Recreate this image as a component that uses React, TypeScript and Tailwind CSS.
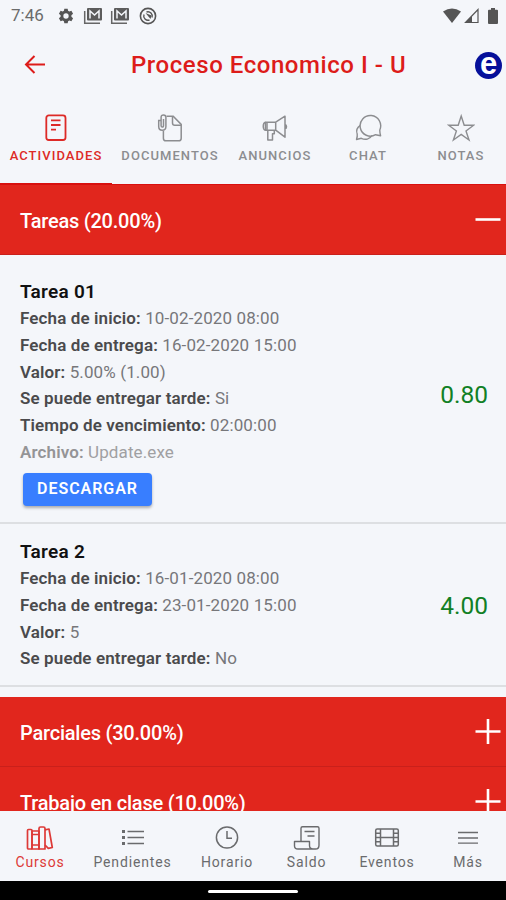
import type { ReactNode } from "react";
import clsx from "clsx";

const ActivitiesIcon = () => (
  <svg width="28" height="30" viewBox="0 0 28 30" fill="none" stroke="currentColor" strokeWidth="1.8">
    <rect x="4.3" y="2.4" width="19.2" height="24.6" rx="2.5" />
    <path d="M9 7.3h9.5M9 12h9.5M9 16.6h5" />
  </svg>
);

const DocumentsIcon = () => (
  <svg width="28" height="30" viewBox="0 0 28 30" fill="none" stroke="currentColor" strokeWidth="1.5">
    <path d="M10.5 3.2h6.700l8 8.200v13.800q0 2.600-2.600 2.600H10q-2.600 0-2.600-2.600V18" />
    <path d="M16.500 3.500v6.500q0 2.300 2.300 2.300h6.500" />
    <path d="M5 7.500H2.700v6q0 3.800 3.600 3.800t3.600-3.800V4.300q0-2.300-2.400-2.300T5.100 4.300v8.500q0 1.300 1.200 1.300t1.200-1.300V6" />
  </svg>
);

const MegaphoneIcon = () => (
  <svg width="28" height="30" viewBox="0 0 28 30" fill="none" stroke="currentColor" strokeWidth="1.5" strokeLinejoin="round">
    <path d="M4.500 9.200h10.200v8H4.500zM14.700 9.200L24 3.200v21l-9.300-7M24 11.500c2 .5 2 3.800 0 4.300" />
    <path d="M4.500 9.200c-3 .6-3 7.400 0 8M6.800 17.200v9.800h4.700v-6.300h1.800v-3.500M6 9.200v8" />
  </svg>
);

const ChatIcon = () => (
  <svg width="28" height="30" viewBox="0 0 28 30" fill="none" stroke="currentColor" strokeWidth="1.4" strokeLinejoin="round">
    <path d="M26.600 22.700l-5-1A10.300 10.300 0 1 1 25.800 17c-.1 2 .4 4 .8 5.700z" />
    <path d="M6.300 12.300c-3.300 2.200-4.300 5.500-3.100 8.700.3 1.800-.1 3.700-.7 5.500l4.800-1.200c4 2 8.500 1 10.700-2.800" />
  </svg>
);

const StarIcon = () => (
  <svg width="28" height="30" viewBox="0 0 28 30" fill="none" stroke="currentColor" strokeWidth="1.4">
    <path d="M14.200 3l3 9.200h9.500l-7.700 5.700 3 9.100-7.800-5.600-7.800 5.600 3-9.100-7.700-5.700h9.500z" />
  </svg>
);

const BooksIcon = () => (
  <svg width="28" height="26" viewBox="0 0 28 26" fill="none" stroke="currentColor" strokeWidth="1.7" strokeLinejoin="round">
    <rect x="1.500" y="4.500" width="4.500" height="19.500" rx="1" />
    <path d="M6 6h7v18H6zM6 9.500h7M6 20h7" />
    <path d="M13 3.500q0-1.500 1.500-1.500h3q1.500 0 1.500 1.500V24h-6z" />
    <path d="M19 4.800l4-.8 3.300 18.500-4 .9L19 20" />
  </svg>
);

const ListIcon = () => (
  <svg width="24" height="26" viewBox="0 0 24 26" fill="none" stroke="currentColor" strokeWidth="1.500">
    <path d="M6.500 6.500H23M6.500 12.500H23M6.500 18.500H23" />
    <path d="M1 6.500h3M1 12.500h3M1 18.500h3" strokeWidth="3" />
  </svg>
);

const ClockIcon = () => (
  <svg width="26" height="26" viewBox="0 0 26 26" fill="none" stroke="currentColor" strokeWidth="1.500">
    <circle cx="13" cy="12.500" r="10.600" />
    <path d="M13 6v7.300h5" />
  </svg>
);

const ReceiptIcon = () => (
  <svg width="28" height="26" viewBox="0 0 28 26" fill="none" stroke="currentColor" strokeWidth="1.400" strokeLinejoin="round">
    <path d="M8 16.500V3.200q0-1.500 1.500-1.500h15q1.500 0 1.500 1.500v17q0 3.800-3.500 3.800H5q-3.500 0-3.500-3v-4.500h15v4q0 3.500 3.500 3.500" />
    <path d="M11.500 6.500h10M14.500 11h7" />
  </svg>
);

const FilmIcon = () => (
  <svg width="26" height="26" viewBox="0 0 26 26" fill="none" stroke="currentColor" strokeWidth="1.500">
    <rect x="1.700" y="4" width="22.600" height="17" rx="1.500" />
    <path d="M6.500 4v17M19.500 4v17M6.500 12.500h13M1.700 8.200h4.800M1.700 12.500h4.800M1.700 16.800h4.800M19.500 8.200h4.800M19.500 12.500h4.800M19.500 16.800h4.800" />
  </svg>
);

const MenuIcon = () => (
  <svg width="22" height="26" viewBox="0 0 22 26" fill="none" stroke="currentColor" strokeWidth="1.300">
    <path d="M1 7.500h20M1 13h20M1 18.200h20" />
  </svg>
);

const MailIcon = () => (
  <svg width="20" height="18" viewBox="0 0 20 18" fill="none">
    <path d="M1.700 4v12.200H17" stroke="#666" strokeWidth="1.500" />
    <rect x="4" y="1" width="15" height="12.500" rx="1" fill="#5c5c5c" />
    <path d="M7 11.500V4l4.500 4L16 4v7.500" stroke="#f4f6fa" strokeWidth="1.500" />
  </svg>
);

const tabs = [
  { label: "ACTIVIDADES", icon: <ActivitiesIcon />, width: "w-[112px]", active: true },
  { label: "DOCUMENTOS", icon: <DocumentsIcon />, width: "w-[116px]" },
  { label: "ANUNCIOS", icon: <MegaphoneIcon />, width: "w-[94px]" },
  { label: "CHAT", icon: <ChatIcon />, width: "w-[92px]" },
  { label: "NOTAS", icon: <StarIcon />, width: "w-[94px]" },
];

const navItems = [
  { label: "Cursos", icon: <BooksIcon />, width: "w-[80px]", active: true },
  { label: "Pendientes", icon: <ListIcon />, width: "w-[105px]" },
  { label: "Horario", icon: <ClockIcon />, width: "w-[84px]" },
  { label: "Saldo", icon: <ReceiptIcon />, width: "w-[75px]" },
  { label: "Eventos", icon: <FilmIcon />, width: "w-[86px]" },
  { label: "Más", icon: <MenuIcon />, width: "w-[76px]" },
];

const StatusBar = () => (
  <div className="flex h-8 shrink-0 items-center justify-between pl-[11px] pr-[8px] text-[#555]">
    <div className="flex items-center">
      <span className="w-[47px] text-[17px] text-[#6b6b6b]">7:46</span>
      <svg width="16" height="16" viewBox="0 0 24 24" fill="currentColor">
        <path
          fillRule="evenodd"
          d="M9.500 1h5l.6 3.200 1.900 1.100 3.100-1.100 2.500 4.300-2.500 2.200v2.600l2.500 2.200-2.500 4.300-3.100-1.100-1.900 1.100-.6 3.200h-5l-.6-3.200L7 18.700l-3.100 1.100-2.500-4.300 2.500-2.200v-2.600L1.400 8.500l2.500-4.300L7 5.300l1.900-1.100zM12 8a4 4 0 1 0 0 8 4 4 0 0 0 0-8z"
        />
      </svg>
      <span className="ml-[9px]"><MailIcon /></span>
      <span className="ml-[7px]"><MailIcon /></span>
      <svg className="ml-[9px]" width="18" height="18" viewBox="0 0 18 18" fill="none" stroke="currentColor">
        <circle cx="9" cy="9" r="7.600" strokeWidth="1.600" />
        <path d="M5 7.500a4.300 4.300 0 0 0 5.500 5.500M13 10.500a4.300 4.300 0 0 0-5.500-5.500" strokeWidth="1.400" />
        <path d="M6.500 6l6 2.500-1 3.500z" fill="currentColor" stroke="none" />
      </svg>
    </div>
    <div className="flex items-center">
      <svg width="18" height="16" viewBox="0 0 18 16" fill="currentColor">
        <path d="M0 3.500Q9-2.500 18 3.500L9 15z" />
      </svg>
      <svg className="ml-[3px]" width="15" height="16" viewBox="0 0 15 16">
        <path d="M1.500 14.500L14 1.500v13z" fill="none" stroke="currentColor" strokeWidth="1.200" />
        <path d="M1 15l7-7v7z" fill="currentColor" />
      </svg>
      <svg className="ml-[9px]" width="10" height="16" viewBox="0 0 10 16" fill="currentColor">
        <path d="M3 0h4v1.700h2q1 0 1 1V15q0 1-1 1H1q-1 0-1-1V2.700q0-1 1-1h2z" />
      </svg>
    </div>
  </div>
);

const Field = ({ label, muted, children }: { label: string; muted?: boolean; children: ReactNode }) => (
  <p className={clsx("h-[26.800px] whitespace-nowrap text-[17px] leading-[26.800px] tracking-[0.120px]", muted ? "text-[#a0a0a2]" : "text-[#77777a]")}>
    <b className={clsx("font-semibold", muted ? "text-[#949496]" : "text-[#4a4a4c]")}>{label}:</b> {children}
  </p>
);

const Section = ({ title, open }: { title: string; open?: boolean }) => (
  <div className="flex h-[70px] shrink-0 items-center justify-between border-b border-[#c9201b] bg-[#e1261d] pl-[20px] pr-[5px] text-white">
    <h2 className="pt-[2px] text-[20px] font-medium tracking-[-0.220px]">{title}</h2>
    <svg width="26" height="26" viewBox="0 0 26 26" fill="none" stroke="currentColor" strokeWidth="2.600">
      <path d={open ? "M0.500 12.500h25" : "M0.500 12.500h25M13 0v25"} />
    </svg>
  </div>
);

export default function App() {
  return (
    <div className="flex h-[900px] w-[506px] flex-col overflow-hidden bg-[#f4f6fa] font-['Roboto',sans-serif]">
      <StatusBar />
      <header className="flex h-[66px] shrink-0 items-center pl-[24px] pr-[4px] text-[#dd1c1a]">
        <svg width="22" height="20" viewBox="0 0 22 20" fill="none" stroke="currentColor" strokeWidth="2">
          <path d="M21 9.500H2M10.500 1L2 9.500l8.500 8.500" />
        </svg>
        <h1 className="ml-[85px] flex-1 whitespace-nowrap text-[24px] font-medium tracking-[0.550px]">Proceso Economico I - U</h1>
        <span className="flex h-[27px] w-[27px] items-center justify-center rounded-full bg-[#06109a]">
          <span className="-mt-[3px] font-['Liberation_Sans',sans-serif] text-[31px] font-bold leading-[24px] text-white">e</span>
        </span>
      </header>

      <nav className="flex h-[86px] shrink-0 items-stretch">
        {tabs.map((tab) => (
          <div
            key={tab.label}
            className={clsx(
              "flex shrink-0 flex-col items-center border-b pt-[15px]",
              tab.width,
              tab.active ? "border-[#d8100f] text-[#dd2a27]" : "border-transparent text-[#8c8d90]"
            )}
          >
            {tab.icon}
            <span className="mt-[4px] text-[13px] font-medium leading-[18px] tracking-[1.050px]">{tab.label}</span>
          </div>
        ))}
      </nav>

      <main className="flex min-h-0 flex-1 flex-col overflow-hidden">
        <div className="-mb-px flex shrink-0 flex-col border-t border-[#d8100f]">
          <Section title="Tareas (20.00%)" open />
        </div>
        <div className="flex h-[270px] shrink-0 items-center justify-between border-b-2 border-[#dddfe2] pl-[20px] pr-[18px]">
          <div className="h-full pt-[24px]">
            <h3 className="h-[27px] text-[19px] font-semibold leading-[27px] tracking-[0.250px] text-[#111]">Tarea 01</h3>
            <Field label="Fecha de inicio">10-02-2020 08:00</Field>
            <Field label="Fecha de entrega">16-02-2020 15:00</Field>
            <Field label="Valor">5.00% (1.00)</Field>
            <Field label="Se puede entregar tarde">Si</Field>
            <Field label="Tiempo de vencimiento">02:00:00</Field>
            <Field label="Archivo" muted>Update.exe</Field>
            <button className="ml-[3px] mt-[7px] h-[33px] w-[129px] rounded bg-[#387eff] text-[16px] font-semibold tracking-[0.950px] text-white shadow-[0_2px_3px_rgba(0,0,0,0.3)]">
              DESCARGAR
            </button>
          </div>
          <span className="mt-[14px] text-[24.500px] text-[#118025]">0.80</span>
        </div>
        <div className="flex h-[163px] shrink-0 items-center justify-between border-b-2 border-[#dddfe2] pl-[20px] pr-[18px]">
          <div className="h-full pt-[14px]">
            <h3 className="h-[27px] text-[19px] font-semibold leading-[27px] tracking-[0.250px] text-[#111]">Tarea 2</h3>
            <Field label="Fecha de inicio">16-01-2020 08:00</Field>
            <Field label="Fecha de entrega">23-01-2020 15:00</Field>
            <Field label="Valor">5</Field>
            <Field label="Se puede entregar tarde">No</Field>
          </div>
          <span className="mt-[3px] text-[24.500px] text-[#118025]">4.00</span>
        </div>
        <div className="h-[10px] shrink-0" />
        <Section title="Parciales (30.00%)" />
        <Section title="Trabajo en clase (10.00%)" />
      </main>

      <footer className="flex h-[70px] shrink-0">
        {navItems.map((item) => (
          <div
            key={item.label}
            className={clsx("flex shrink-0 flex-col items-center pt-[14px]", item.width, item.active ? "text-[#dd3a37]" : "text-[#6a6b6d]")}
          >
            {item.icon}
            <span className="mt-[2px] text-[14px] leading-[18px] tracking-[0.850px]">{item.label}</span>
          </div>
        ))}
      </footer>
      <div className="flex h-[19px] shrink-0 items-center justify-center bg-black pt-[2px]">
        <div className="h-[3px] w-[90px] rounded-full bg-white" />
      </div>
    </div>
  );
}
